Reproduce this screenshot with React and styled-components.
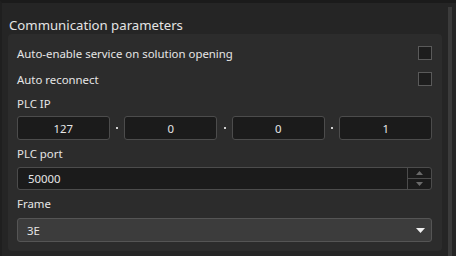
import React from 'react'
import styled, { createGlobalStyle } from 'styled-components'

const GlobalStyle = createGlobalStyle`
  html, body {
    margin: 0;
    padding: 0;
    background: #252525;
  }
  body {
    font-family: "Noto Sans", "Open Sans", sans-serif;
    color: #e6e6e6;
  }
`

const Window = styled.div`
  position: relative;
  width: 456px;
  height: 256px;
  box-sizing: border-box;
  background: #252525;
  border-top: 3px solid #1b1b1b;
  border-left: 2px solid #1f1f1f;
  display: flex;
  overflow: hidden;
`

const Content = styled.div`
  flex: 1;
  padding: 0 0 0 6px;
`

const Title = styled.div`
  font-size: 13.2px;
  line-height: 18px;
  height: 18px;
  margin: 13px 0 0 1px;
  color: #e4e4e4;
`

const Panel = styled.div`
  width: 434px;
  height: 217px;
  box-sizing: border-box;
  background: #2c2c2c;
  border-radius: 4px;
  padding: 6px 10px 0 9px;
`

const CheckRow = styled.div`
  display: flex;
  align-items: center;
  justify-content: space-between;
  height: 26px;
  font-size: 11.4px;
`

const Box = styled.span`
  width: 14px;
  height: 14px;
  box-sizing: border-box;
  border: 1px solid #5a5a5a;
  background: #1d1d1d;
`

const Label = styled.div`
  font-size: 11.4px;
  line-height: 16px;
  height: ${p => p.h || 20}px;
  display: flex;
  align-items: center;
`

const IpRow = styled.div`
  display: flex;
  align-items: center;
  height: 24px;
`

const IpBox = styled.div`
  width: 93px;
  height: 24px;
  box-sizing: border-box;
  border: 1px solid #4c4c4c;
  border-radius: 3px;
  background: #1b1b1b;
  display: flex;
  align-items: center;
  justify-content: center;
  font-size: 11.4px;
`

const Dot = styled.span`
  width: 15px;
  display: flex;
  justify-content: center;
  &::before {
    content: '';
    width: 2px;
    height: 2px;
    background: #d0d0d0;
  }
`

const Spin = styled.div`
  display: flex;
  height: 23px;
  box-sizing: border-box;
  border: 1px solid #4c4c4c;
  border-radius: 3px;
  background: #1b1b1b;
  font-size: 11.4px;
`

const SpinValue = styled.div`
  flex: 1;
  display: flex;
  align-items: center;
  padding-left: 10px;
`

const SpinButtons = styled.div`
  width: 23px;
  border-left: 1px solid #4c4c4c;
  display: flex;
  flex-direction: column;
`

const SpinBtn = styled.div`
  flex: 1;
  display: flex;
  align-items: center;
  justify-content: center;
  border-top: ${p => (p.$bottom ? '1px solid #4c4c4c' : 'none')};
`

const Select = styled.div`
  height: 24px;
  box-sizing: border-box;
  border: 1px solid #555;
  border-radius: 3px;
  background: #3c3c3c;
  display: flex;
  align-items: center;
  justify-content: space-between;
  padding: 0 6px 0 9px;
  font-size: 11.4px;
`

const Scrollbar = styled.div`
  width: 4px;
  margin: 4px 4px 0 6px;
  background: #3b3b3b;
  height: 260px;
`

const Tri = ({ dir = 'down', size = 3, color = '#777' }) => (
  <svg width={size * 2 + 1} height={size + 1} viewBox={`0 0 ${size * 2 + 1} ${size + 1}`}>
    {dir === 'up' ? (
      <polygon points={`0,${size + 1} ${size * 2 + 1},${size + 1} ${size + 0.5},0`} fill={color} />
    ) : (
      <polygon points={`0,0 ${size * 2 + 1},0 ${size + 0.5},${size + 1}`} fill={color} />
    )}
  </svg>
)

export default function App() {
  return (
    <>
      <GlobalStyle />
      <Window>
        <Content>
          <Title>Communication parameters</Title>
          <Panel>
            <CheckRow>
              <span>Auto-enable service on solution opening</span>
              <Box />
            </CheckRow>
            <CheckRow>
              <span>Auto reconnect</span>
              <Box />
            </CheckRow>
            <Label h={24}>PLC IP</Label>
            <IpRow>
              <IpBox>127</IpBox>
              <Dot />
              <IpBox>0</IpBox>
              <Dot />
              <IpBox>0</IpBox>
              <Dot />
              <IpBox>1</IpBox>
            </IpRow>
            <Label h={27}>PLC port</Label>
            <Spin>
              <SpinValue>50000</SpinValue>
              <SpinButtons>
                <SpinBtn>
                  <Tri dir="up" size={3} color="#6a6a6a" />
                </SpinBtn>
                <SpinBtn $bottom>
                  <Tri dir="down" size={3} color="#6a6a6a" />
                </SpinBtn>
              </SpinButtons>
            </Spin>
            <Label h={28}>Frame</Label>
            <Select>
              <span>3E</span>
              <Tri dir="down" size={4} color="#f0f0f0" />
            </Select>
          </Panel>
        </Content>
        <Scrollbar />
      </Window>
    </>
  )
}
